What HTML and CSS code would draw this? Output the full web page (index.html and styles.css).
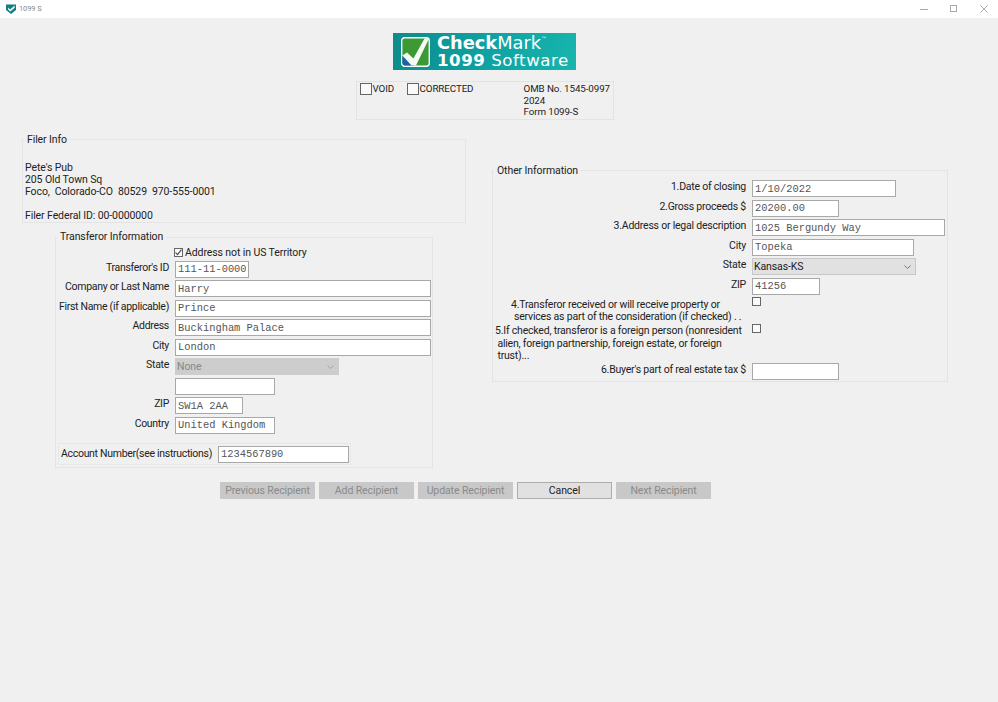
FILE: index.html
```html
<!DOCTYPE html>
<html lang="en">
<head>
<meta charset="utf-8">
<title>1099 S</title>
<link rel="stylesheet" href="styles.css">
</head>
<body>
<header class="titlebar">
  <svg class="app-icon" width="12" height="12" viewBox="0 0 12 12"><path d="M1 1.5h10v5.5L6 11 1 7z" fill="#0f7f80"/><path d="M3.2 4.6l2 2L9.6 2.6v2.2L5.2 8.6 3.2 6.6z" fill="#fff"/></svg>
  <span class="app-title">1099 S</span>
  <div class="win-controls">
    <svg width="10" height="10" viewBox="0 0 10 10"><path d="M1 5.5h8" stroke="#aaa" fill="none"/></svg>
    <svg width="10" height="10" viewBox="0 0 10 10"><rect x="1.5" y="1.5" width="6" height="6" stroke="#aaa" fill="none"/></svg>
    <svg width="10" height="10" viewBox="0 0 10 10"><path d="M1.5 1.5l7 7M8.5 1.5l-7 7" stroke="#aaa" fill="none"/></svg>
  </div>
</header>

<section class="head">
  <div class="logo">
    <svg class="logo-mark" width="29" height="30" viewBox="0 0 29 30">
      <rect x="0.7" y="0.7" width="27.6" height="28.6" rx="3" fill="#3c9a35" stroke="#fff" stroke-width="1.4"/>
      <path d="M1.4 19l12 9.6H4.4a3 3 0 0 1-3-3z" fill="#1d62a8"/>
      <path d="M1.4 18.5l4.6-3 6.4 6L23.5 1.4h4.1v1L15 28.6h-4.5z" fill="#fff" opacity="0.95"/>
    </svg>
    <div class="logo-text">
      <div class="logo-top"><b>Check</b>Mark<sup>™</sup></div>
      <div class="logo-bottom"><b>1099</b> Software</div>
    </div>
  </div>
  <div class="form-box">
    <label class="check-label void"><span class="box box-lg"></span>VOID</label>
    <label class="check-label"><span class="box box-lg"></span>CORRECTED</label>
    <div class="omb">OMB No. 1545-0997<br>2024<br>Form 1099-S</div>
  </div>
</section>

<main class="columns">
  <div class="col-left">
    <fieldset class="group filer">
      <legend>Filer Info</legend>
      <p>Pete's Pub<br>205 Old Town Sq<br>Foco,&nbsp; Colorado-CO&nbsp; 80529&nbsp; 970-555-0001</p>
      <p class="filer-id">Filer Federal ID: 00-0000000</p>
    </fieldset>

    <fieldset class="group transferor">
      <legend>Transferor Information</legend>
      <div class="rows rows-left">
        <span></span>
        <label class="check-label tight"><span class="box box-sm"><svg width="9" height="9" viewBox="0 0 9 9"><path d="M1.5 4.5l2 2.2 4-5" stroke="#444" stroke-width="1.1" fill="none"/></svg></span>Address not in US Territory</label>
        <span class="lbl">Transferor's ID</span><input class="w74" value="111-11-0000">
        <span class="lbl">Company or Last Name</span><input class="w256" value="Harry">
        <span class="lbl">First Name (if applicable)</span><input class="w256" value="Prince">
        <span class="lbl">Address</span><input class="w256" value="Buckingham Palace">
        <span class="lbl">City</span><input class="w256" value="London">
        <span class="lbl">State</span>
        <div class="sel-wrap w164"><select class="sel" disabled><option>None</option></select><svg class="chev" width="7" height="4" viewBox="0 0 7 4"><path d="M.5.5l3 3 3-3" stroke="#a5a5a5" fill="none"/></svg></div>
        <span></span><input class="w100" value="">
        <span class="lbl">ZIP</span><input class="w68" value="SW1A 2AA">
        <span class="lbl">Country</span><input class="w100" value="United Kingdom">
      </div>
      <div class="account">
        <span class="lbl acct-lbl">Account Number(see instructions)</span><input class="w131" value="1234567890">
      </div>
    </fieldset>
  </div>

  <div class="col-right">
    <fieldset class="group other">
      <legend>Other Information</legend>
      <div class="rows rows-right">
        <span class="lbl">1.Date of closing</span><input class="w144" value="1/10/2022">
        <span class="lbl">2.Gross proceeds $</span><input class="w87" value="20200.00">
        <span class="lbl">3.Address or legal description</span><input class="w193" value="1025 Bergundy Way">
        <span class="lbl">City</span><input class="w162" value="Topeka">
        <span class="lbl">State</span>
        <div class="sel-wrap w164"><select class="sel enabled"><option>Kansas-KS</option></select><svg class="chev" width="7" height="4" viewBox="0 0 7 4"><path d="M.5.5l3 3 3-3" stroke="#777" fill="none"/></svg></div>
        <span class="lbl">ZIP</span><input class="w68" value="41256">
      </div>
      <div class="q q4">
        <span class="q-text"><span class="line-a">4.Transferor received or will receive property or</span><span class="line-b">services as part of the consideration (if checked) . .</span></span>
        <span class="box box-sm"></span>
      </div>
      <div class="q q5">
        <span class="q-text">5.If checked, transferor is a foreign person (nonresident<br>&nbsp;alien, foreign partnership, foreign estate, or foreign<br>&nbsp;trust)...</span>
        <span class="box box-sm"></span>
      </div>
      <div class="rows rows-right q6">
        <span class="lbl">6.Buyer's part of real estate tax $</span><input class="w87" value="">
      </div>
    </fieldset>
  </div>
</main>

<nav class="actions">
  <button class="btn" disabled>Previous Recipient</button>
  <button class="btn" disabled>Add Recipient</button>
  <button class="btn" disabled>Update Recipient</button>
  <button class="btn primary">Cancel</button>
  <button class="btn" disabled>Next Recipient</button>
</nav>
</body>
</html>
```

FILE: styles.css
```css
* { box-sizing: border-box; }
html, body { margin: 0; padding: 0; }
body {
  width: 998px;
  height: 702px;
  overflow: hidden;
  background: #f0f0f0;
  color: #222;
  font-family: Roboto, "Noto Sans", sans-serif;
  font-size: 10.5px;
  letter-spacing: -0.1px;
  line-height: 12px;
}

.titlebar {
  height: 18px;
  background: #fff;
  display: flex;
  align-items: center;
  padding-left: 5px;
}
.app-title { margin-left: 2px; font-size: 7.5px; color: #8a8a8a; }
.win-controls {
  margin-left: auto;
  display: flex;
  gap: 20px;
  padding-right: 9px;
}

.head {
  width: 969px;
  display: flex;
  flex-direction: column;
  align-items: center;
}
.logo {
  margin-top: 15px;
  width: 183px;
  height: 37px;
  background: linear-gradient(100deg, #0b8c8d 0%, #10a3a3 55%, #17b5ad 100%);
  display: flex;
  align-items: center;
  padding-left: 8px;
  color: #fff;
  font-family: "DejaVu Sans", sans-serif;
  letter-spacing: 0;
}
.logo-text { margin-left: 7px; }
.logo-top { font-size: 17.8px; line-height: 19px; white-space: nowrap; }
.logo-top sup { font-size: 6px; line-height: 0; vertical-align: 8px; }
.logo-bottom { font-size: 16.6px; line-height: 18px; white-space: nowrap; letter-spacing: 0.55px; }

.form-box {
  margin-top: 11px;
  width: 258px;
  height: 39px;
  border: 1px solid #e3e3e3;
  display: flex;
  align-items: flex-start;
  padding: 1px 0 0 3px;
}
.check-label { display: flex; align-items: center; gap: 1px; white-space: nowrap; font-size: 9.8px; }
.check-label.void { width: 47px; }
.check-label.tight { font-size: 10.5px; gap: 2px; margin: 4px 0 0 -1px; }
.box {
  display: inline-flex;
  flex: none;
  background: #fafafa;
  border: 1px solid #666;
  align-items: center;
  justify-content: center;
}
.box-lg { width: 12px; height: 12px; }
.box-sm { width: 9px; height: 9px; }
.box-sm svg { flex: none; }
.omb { margin-left: auto; margin-right: 3px; width: 86px; font-size: 9.8px; line-height: 11.5px; white-space: nowrap; }

.columns { display: flex; align-items: flex-start; margin-top: 12px; }
.col-left { margin-left: 22px; width: 444px; }
.col-right { margin-left: 26px; width: 456px; margin-top: 31px; }

.group {
  margin: 0;
  padding: 0;
  min-width: 0;
  border: 1px solid #e4e4e4;
}
.group legend { padding: 0 3px; margin-left: 1px; line-height: 12px; white-space: nowrap; }

.filer { height: 91px; padding: 0 2px; }
.filer legend { margin-left: -1px; padding-top: 2px; }
.filer p { margin: 0; }
.filer p:first-of-type { margin-top: 16px; }
.filer-id { margin-top: 12px !important; }

.transferor { margin: 8px 0 0 33px; width: 378px; height: 237px; }
.transferor legend { margin-bottom: -2px; }

.rows { display: grid; grid-auto-rows: 19.5px; column-gap: 6px; align-items: start; }
.rows-left { grid-template-columns: 113px 1fr; }
.rows-right { grid-template-columns: 253px 1fr; }
.rows-left > :nth-child(2) { align-self: center; }

.lbl { text-align: right; white-space: nowrap; line-height: 14px; letter-spacing: -0.22px; }
.rows-left .lbl { letter-spacing: -0.3px; }

input, .sel {
  display: block;
  height: 17px;
  padding: 0 2px;
  margin: 0;
  border: 1px solid #a8a8a8;
  border-radius: 0;
  outline: none;
  background: #fff;
  color: #555;
  font-family: "Liberation Mono", monospace;
  font-size: 10.4px;
  letter-spacing: 0;
}
.sel-wrap { position: relative; height: 17px; }
.chev { position: absolute; right: 5px; top: 7px; pointer-events: none; }
.sel {
  width: 100%;
  appearance: none;
  background: #cdcdcd;
  border-color: #cdcdcd;
  color: #888;
  padding: 0 0 0 1px;
  font-family: Roboto, sans-serif;
  font-size: 10.5px;
  letter-spacing: -0.1px;
  opacity: 1;
}
.sel.enabled { background: #e1e1e1; border-color: #c8c8c8; color: #222; }

.w68 { width: 68px; }
.w74 { width: 74px; }
.w87 { width: 87px; }
.w100 { width: 100px; }
.w131 { width: 131px; }
.w144 { width: 144px; }
.w162 { width: 162px; }
.w164 { width: 164px; }
.w193 { width: 193px; }
.w256 { width: 256px; }

.account {
  margin: 7px 0 0 2px;
  width: 293px;
  height: 22px;
  border: 1px solid #e8e8e8;
  display: flex;
  align-items: center;
  gap: 7px;
  padding-left: 2px;
}
.acct-lbl { flex: none; width: 150px; text-align: left; letter-spacing: -0.3px; }

.other { height: 219px; padding-top: 3px; }
.other legend { padding-top: 2px; }
.q { display: grid; grid-template-columns: 253px 9px; column-gap: 6px; }
.q-text { white-space: nowrap; display: block; letter-spacing: -0.2px; }
.line-a, .line-b { display: block; }
.line-a { padding-left: 18px; }
.line-b { padding-left: 21px; }
.q4 { margin-top: 2px; height: 26px; }
.q4 .box { margin-top: -2px; }
.q5 .box { margin-top: -1px; }
.q5 { height: 37px; padding-left: 2px; grid-template-columns: 251px 9px; line-height: 12.5px; }
.q6 { margin-top: 1px; }

.actions { display: flex; gap: 4px; margin: 14px 0 0 220px; }
.btn {
  width: 95px;
  height: 17px;
  padding: 0;
  border: 1px solid #c8c8c8;
  background: #c8c8c8;
  color: #8a8a8a;
  font-family: Roboto, sans-serif;
  font-size: 10.5px;
  letter-spacing: -0.1px;
  line-height: 14px;
}
.btn.primary { background: #e1e1e1; border-color: #adadad; color: #222; }
```
